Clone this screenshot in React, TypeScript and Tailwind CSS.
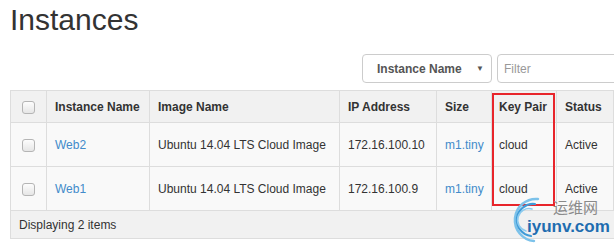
const rows = [
  { name: 'Web2', image: 'Ubuntu 14.04 LTS Cloud Image', ip: '172.16.100.10', size: 'm1.tiny', key: 'cloud', status: 'Active' },
  { name: 'Web1', image: 'Ubuntu 14.04 LTS Cloud Image', ip: '172.16.100.9', size: 'm1.tiny', key: 'cloud', status: 'Active' },
]

function Check() {
  return (
    <span className="inline-block w-[13px] h-[13px] rounded-[3px] border border-[#b5b5b5] bg-gradient-to-b from-[#fdfdfd] to-[#e6e6e6] align-middle" />
  )
}

function Watermark() {
  return (
    <div className="absolute left-[504px] top-[196px] w-[110px] h-[47px] pointer-events-none">
      <svg width="44" height="47" viewBox="0 0 44 47" className="absolute left-0 top-0">
        <path d="M34 3 A21 21 0 1 0 30 45" fill="none" stroke="#7cc2ea" strokeWidth="2.5" strokeLinecap="round" />
        <path d="M31 8 A16 16 0 1 0 27 40" fill="none" stroke="#3f9bd8" strokeWidth="2.2" strokeLinecap="round" />
        <path d="M28 13 A11 11 0 0 0 22 35" fill="none" stroke="#8ccbef" strokeWidth="1.6" strokeLinecap="round" />
      </svg>
      <span className="absolute left-[49px] top-[2px] whitespace-nowrap text-[15px] leading-[17px] text-[#8a8a8a] font-['Noto_Sans_CJK_SC',sans-serif]">运维网</span>
      <span className="absolute left-[23px] top-[20px] whitespace-nowrap text-[17px] leading-[21px] font-bold text-[#1f6db0] font-['Liberation_Sans',sans-serif]">iyunv.com</span>
    </div>
  )
}

export default function App() {
  return (
    <div className="relative w-[614px] h-[243px] overflow-hidden bg-white text-[#333] font-['Liberation_Sans',Arial,sans-serif]">
      <h1 className="pl-[10px] pt-[3px] text-[30px] leading-[33px] font-normal text-[#333]">Instances</h1>

      {/* Toolbar */}
      <div className="mt-[18px] flex pl-[362px] gap-[5px]">
        <div className="flex items-center shrink-0 w-[130px] h-[29px] border border-[#ccc] rounded-[4px] bg-white pl-[14px] pr-[7px]">
          <span className="flex-1 whitespace-nowrap text-[12px] font-bold text-[#555]">Instance Name</span>
          <span className="text-[8px] text-[#555]">▼</span>
        </div>
        <div className="flex items-center shrink-0 w-[200px] h-[29px] border border-[#ccc] rounded-l-[4px] bg-white pl-[6px]">
          <span className="text-[12px] text-[#999]">Filter</span>
        </div>
      </div>

      {/* Table */}
      <div className="mt-[7px] pl-[10px]">
        <table className="border-collapse text-[12px] w-[720px] table-fixed">
          <colgroup>
            <col className="w-[36px]" />
            <col className="w-[103px]" />
            <col className="w-[190px]" />
            <col className="w-[97px]" />
            <col className="w-[55px]" />
            <col className="w-[65px]" />
            <col className="w-[57px]" />
            <col className="w-[117px]" />
          </colgroup>
          <thead>
            <tr className="bg-[#f1f1f1] h-[32px]">
              <th className="border border-[#ddd] text-center"><Check /></th>
              <th className="border border-[#ddd] text-left font-bold px-[8px]">Instance Name</th>
              <th className="border border-[#ddd] text-left font-bold px-[8px]">Image Name</th>
              <th className="border border-[#ddd] text-left font-bold px-[8px]">IP Address</th>
              <th className="border border-[#ddd] text-left font-bold px-[8px]">Size</th>
              <th className="border border-[#ddd] text-left font-bold px-[7px]">Key Pair</th>
              <th className="border border-[#ddd] text-left font-bold px-[8px]">Status</th>
              <th className="border border-[#ddd]" />
            </tr>
          </thead>
          <tbody>
            {rows.map((r) => (
              <tr key={r.name} className="bg-[#f9f9f9] h-[44px]">
                <td className="border border-[#ddd] text-center"><Check /></td>
                <td className="border border-[#ddd] px-[8px] text-[#428bca]">{r.name}</td>
                <td className="border border-[#ddd] px-[8px]">{r.image}</td>
                <td className="border border-[#ddd] px-[8px]">{r.ip}</td>
                <td className="border border-[#ddd] px-[8px] text-[#428bca]">{r.size}</td>
                <td className="border border-[#ddd] px-[7px]">{r.key}</td>
                <td className="border border-[#ddd] px-[8px]">{r.status}</td>
                <td className="border border-[#ddd]" />
              </tr>
            ))}
          </tbody>
          <tfoot>
            <tr className="bg-[#f1f1f1] h-[28px]">
              <td colSpan={8} className="border border-[#ddd] px-[8px]">Displaying 2 items</td>
            </tr>
          </tfoot>
        </table>
      </div>

      {/* highlight box */}
      <div className="absolute left-[492px] top-[93px] w-[63px] h-[113px] border-2 border-[#e8252b]" />

      <Watermark />
    </div>
  )
}
